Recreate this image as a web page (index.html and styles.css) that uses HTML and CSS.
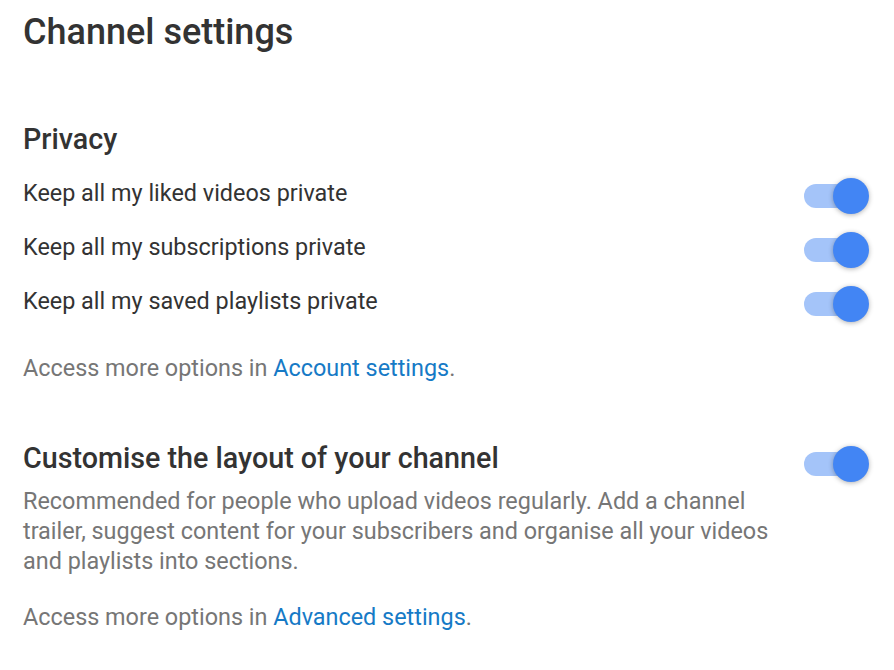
FILE: index.html
```html
<!DOCTYPE html>
<html lang="en">

<head>
    <meta charset="UTF-8">
    <meta name="viewport" content="width=device-width, initial-scale=1.0">
    <title>Channel settings</title>
    <link rel="stylesheet" href="styles.css">
</head>

<body>
    <div class="page">
        <h1>Channel settings</h1>

        <section class="privacy">
            <h2>Privacy</h2>
            <div class="row">
                <span>Keep all my liked videos private</span>
                <div class="toggle on"><div class="knob"></div></div>
            </div>
            <div class="row">
                <span>Keep all my subscriptions private</span>
                <div class="toggle on"><div class="knob"></div></div>
            </div>
            <div class="row">
                <span>Keep all my saved playlists private</span>
                <div class="toggle on"><div class="knob"></div></div>
            </div>
            <p class="more">Access more options in <a href="#">Account settings</a>.</p>
        </section>

        <section class="layout">
            <div class="head">
                <h2>Customise the layout of your channel</h2>
                <div class="toggle on"><div class="knob"></div></div>
            </div>
            <p class="desc">Recommended for people who upload videos regularly. Add a channel trailer, suggest content for your subscribers and organise all your videos and playlists into sections.</p>
            <p class="more">Access more options in <a href="#">Advanced settings</a>.</p>
        </section>
    </div>
</body>

</html>
```

FILE: styles.css
```css
body {
    margin: 0;
    font-family: Roboto, Arial, sans-serif;
    color: #333;
    background-color: white;
}

.page {
    padding: 8px 25px 0 23px;
}

h1 {
    font-size: 36px;
    font-weight: 500;
    margin: 0;
    line-height: 48px;
}

h2 {
    font-size: 28.7px;
    font-weight: 500;
    margin: 0;
    line-height: 36px;
}

.privacy {
    margin-top: 65px;
}

.privacy h2 {
    margin-bottom: 9px;
}

.row {
    display: flex;
    align-items: flex-start;
    justify-content: space-between;
    height: 54px;
    font-size: 23.4px;
}

.row span {
    line-height: 27px;
    margin-top: 14px;
}

.row .toggle {
    margin-top: 18px;
}

.more {
    font-size: 23.4px;
    line-height: 27px;
    color: #767676;
    margin: 27px 0 0;
}

.more a {
    color: #167ac6;
    text-decoration: none;
}

.layout {
    margin-top: 58px;
}

.head {
    display: flex;
    align-items: flex-start;
    justify-content: space-between;
}

.head .toggle {
    margin-top: 12px;
}

.desc {
    font-size: 23.4px;
    line-height: 30px;
    color: #767676;
    max-width: 770px;
    margin: 10px 0 0;
}

.layout .more {
    margin-top: 28px;
}

.toggle {
    position: relative;
    flex-shrink: 0;
    width: 58px;
    height: 24px;
    border-radius: 12px;
    background-color: #a4c4f9;
    margin-right: 7px;
}

.knob {
    position: absolute;
    top: -6px;
    right: -7px;
    width: 36px;
    height: 36px;
    border-radius: 50%;
    background-color: #4285f4;
    box-shadow: 0 1px 5px rgba(0, 0, 0, 0.3);
}
```
